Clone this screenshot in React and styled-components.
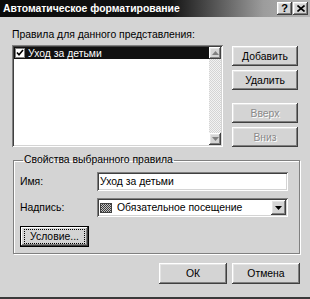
import React from "react";
import styled, { createGlobalStyle, css } from "styled-components";

const GlobalStyle = createGlobalStyle`
  * { box-sizing: border-box; }
  body {
    margin: 0;
    background: #d4d4d4;
    font-family: "Liberation Sans", Arial, sans-serif;
    font-size: 10.4px;
    color: #000;
  }
`;

// bevels in the old windows style
const raised = css`
  box-shadow: inset -1px -1px #404040, inset 1px 1px #ffffff,
    inset -2px -2px #808080, inset 2px 2px #e4e4e4;
`;
const sunken = css`
  box-shadow: inset 1px 1px #808080, inset -1px -1px #ffffff,
    inset 2px 2px #404040, inset -2px -2px #d4d4d4;
`;

const Window = styled.div`
  width: 310px;
  height: 299px;
  background: #d4d4d4;
  display: flex;
  flex-direction: column;
  border-bottom: 2px solid #3a3a3a;
  overflow: hidden;
`;

const TitleBar = styled.div`
  height: 17px;
  flex: none;
  display: flex;
  align-items: center;
  padding: 0 2px 0 3px;
  background: linear-gradient(90deg, #0a0a0a 0%, #141414 55%, #9c9c9c 85%, #b4b4b4 100%);
`;

const Title = styled.div`
  flex: 1;
  color: #fff;
  font-weight: bold;
  font-size: 10.4px;
`;

const TitleButton = styled.div`
  width: 15px;
  height: 13px;
  margin-left: ${(p) => (p.gap ? "1px" : "0")};
  background: #d4d4d4;
  ${raised};
  display: flex;
  align-items: center;
  justify-content: center;
  font-weight: bold;
  font-size: 11px;
  line-height: 1;
`;

const Body = styled.div`
  flex: 1;
  display: flex;
  flex-direction: column;
  padding: 11px 10px 0 12px;
`;

const Caption = styled.div`
  height: 13px;
  line-height: 13px;
`;

const TopRow = styled.div`
  display: flex;
  margin-top: 4px;
`;

const ListBox = styled.div`
  width: 211px;
  height: 102px;
  background: #fff;
  ${sunken};
  padding: 2px;
  display: flex;
`;

const ListItems = styled.div`
  flex: 1;
`;

const ListRow = styled.div`
  height: 12px;
  display: flex;
  align-items: center;
  gap: 3px;
  padding-left: 1px;
  background: ${(p) => (p.selected ? "#111" : "transparent")};
  color: ${(p) => (p.selected ? "#fff" : "#000")};
`;

const Check = styled.span`
  width: 10px;
  height: 10px;
  background: #fff;
  border: 1px solid #808080;
  display: flex;
  align-items: center;
  justify-content: center;
`;

const ScrollBar = styled.div`
  width: 12px;
  display: flex;
  flex-direction: column;
  justify-content: space-between;
  background: repeating-conic-gradient(#f2f2f2 0 25%, #d4d4d4 0 50%) 0 0 / 2px 2px;
`;

const ArrowBox = styled.div`
  width: 12px;
  height: 12px;
  background: #d4d4d4;
  ${raised};
  display: flex;
  align-items: center;
  justify-content: center;
`;

const ButtonColumn = styled.div`
  margin-left: 9px;
  display: flex;
  flex-direction: column;
  gap: 4px;
  padding-top: 1px;
`;

const Button = styled.div`
  width: ${(p) => p.w || 66}px;
  height: ${(p) => p.h || 20}px;
  flex: none;
  background: #d4d4d4;
  ${raised};
  display: flex;
  align-items: center;
  justify-content: center;
  margin-top: ${(p) => p.mt || 0}px;
  ${(p) =>
    p.disabled &&
    css`
      color: #8a8a8a;
      text-shadow: 1px 1px #fff;
    `}
  ${(p) =>
    p.focused &&
    css`
      border: 1px solid #000;
      box-shadow: inset -1px -1px #404040, inset 1px 1px #ffffff,
        inset -2px -2px #808080;
    `}
`;

const FocusRing = styled.span`
  border: 1px dotted #000;
  padding: 1px 5px 1px 5px;
  line-height: 11px;
`;

const Group = styled.fieldset`
  margin: 7px 0 0 1px;
  width: 287px;
  height: 100px;
  padding: 6px 10px 0 6px;
  border: 1px solid #808080;
  box-shadow: 1px 1px #fff, inset 1px 1px #fff;
  display: flex;
  flex-direction: column;
`;

const Legend = styled.legend`
  padding: 0 1px;
  margin-left: 3px;
  line-height: 12px;
`;

const FieldRow = styled.div`
  display: flex;
  align-items: center;
  margin-bottom: ${(p) => p.mb || 0}px;
`;

const FieldLabel = styled.div`
  width: 77px;
`;

const TextField = styled.div`
  width: 191px;
  height: 19px;
  background: #fff;
  ${sunken};
  display: flex;
  align-items: center;
  padding: 0 3px;
`;

const Swatch = styled.span`
  width: 12px;
  height: 10px;
  margin-right: 5px;
  border: 1px solid #404040;
  background: repeating-conic-gradient(#3c3c3c 0 25%, #c4c4c4 0 50%) 0 0 / 2px 2px;
`;

const DropButton = styled.div`
  margin-left: auto;
  margin-right: -1px;
  width: 15px;
  height: 15px;
  background: #d4d4d4;
  ${raised};
  display: flex;
  align-items: center;
  justify-content: center;
`;

const Footer = styled.div`
  display: flex;
  justify-content: flex-end;
  gap: 5px;
  margin-top: 9px;
`;

const Arrow = ({ down, color = "#808080" }) => (
  <svg width="7" height="4" viewBox="0 0 7 4">
    <path d={down ? "M0 0h7L3.5 4z" : "M0 4h7L3.5 0z"} fill={color} />
  </svg>
);

const App = () => {
  return (
    <>
      <GlobalStyle />
      <Window>
        <TitleBar>
          <Title>Автоматическое форматирование</Title>
          <TitleButton>?</TitleButton>
          <TitleButton gap>
            <svg width="8" height="7" viewBox="0 0 8 7">
              <path d="M0.5 0.5L7.5 6.5M7.5 0.5L0.5 6.5" stroke="#000" strokeWidth="1.6" />
            </svg>
          </TitleButton>
        </TitleBar>
        <Body>
          <Caption>Правила для данного представления:</Caption>
          <TopRow>
            <ListBox>
              <ListItems>
                <ListRow selected>
                  <Check>
                    <svg width="8" height="8" viewBox="0 0 8 8">
                      <path d="M1 3.5L3 5.8L7 1" stroke="#000" strokeWidth="1.6" fill="none" />
                    </svg>
                  </Check>
                  Уход за детьми
                </ListRow>
              </ListItems>
              <ScrollBar>
                <ArrowBox>
                  <Arrow />
                </ArrowBox>
                <ArrowBox>
                  <Arrow down />
                </ArrowBox>
              </ScrollBar>
            </ListBox>
            <ButtonColumn>
              <Button>Добавить</Button>
              <Button>Удалить</Button>
              <Button disabled mt={9}>
                Вверх
              </Button>
              <Button disabled>Вниз</Button>
            </ButtonColumn>
          </TopRow>
          <Group>
            <Legend>Свойства выбранного правила</Legend>
            <FieldRow mb={7}>
              <FieldLabel>Имя:</FieldLabel>
              <TextField>Уход за детьми</TextField>
            </FieldRow>
            <FieldRow mb={9}>
              <FieldLabel>Надпись:</FieldLabel>
              <TextField>
                <Swatch />
                Обязательное посещение
                <DropButton>
                  <Arrow down color="#000" />
                </DropButton>
              </TextField>
            </FieldRow>
            <Button focused w={69} h={21}>
              <FocusRing>Условие...</FocusRing>
            </Button>
          </Group>
          <Footer>
            <Button w={68} h={21}>
              ОК
            </Button>
            <Button w={68} h={21}>
              Отмена
            </Button>
          </Footer>
        </Body>
      </Window>
    </>
  );
};

export default App;
